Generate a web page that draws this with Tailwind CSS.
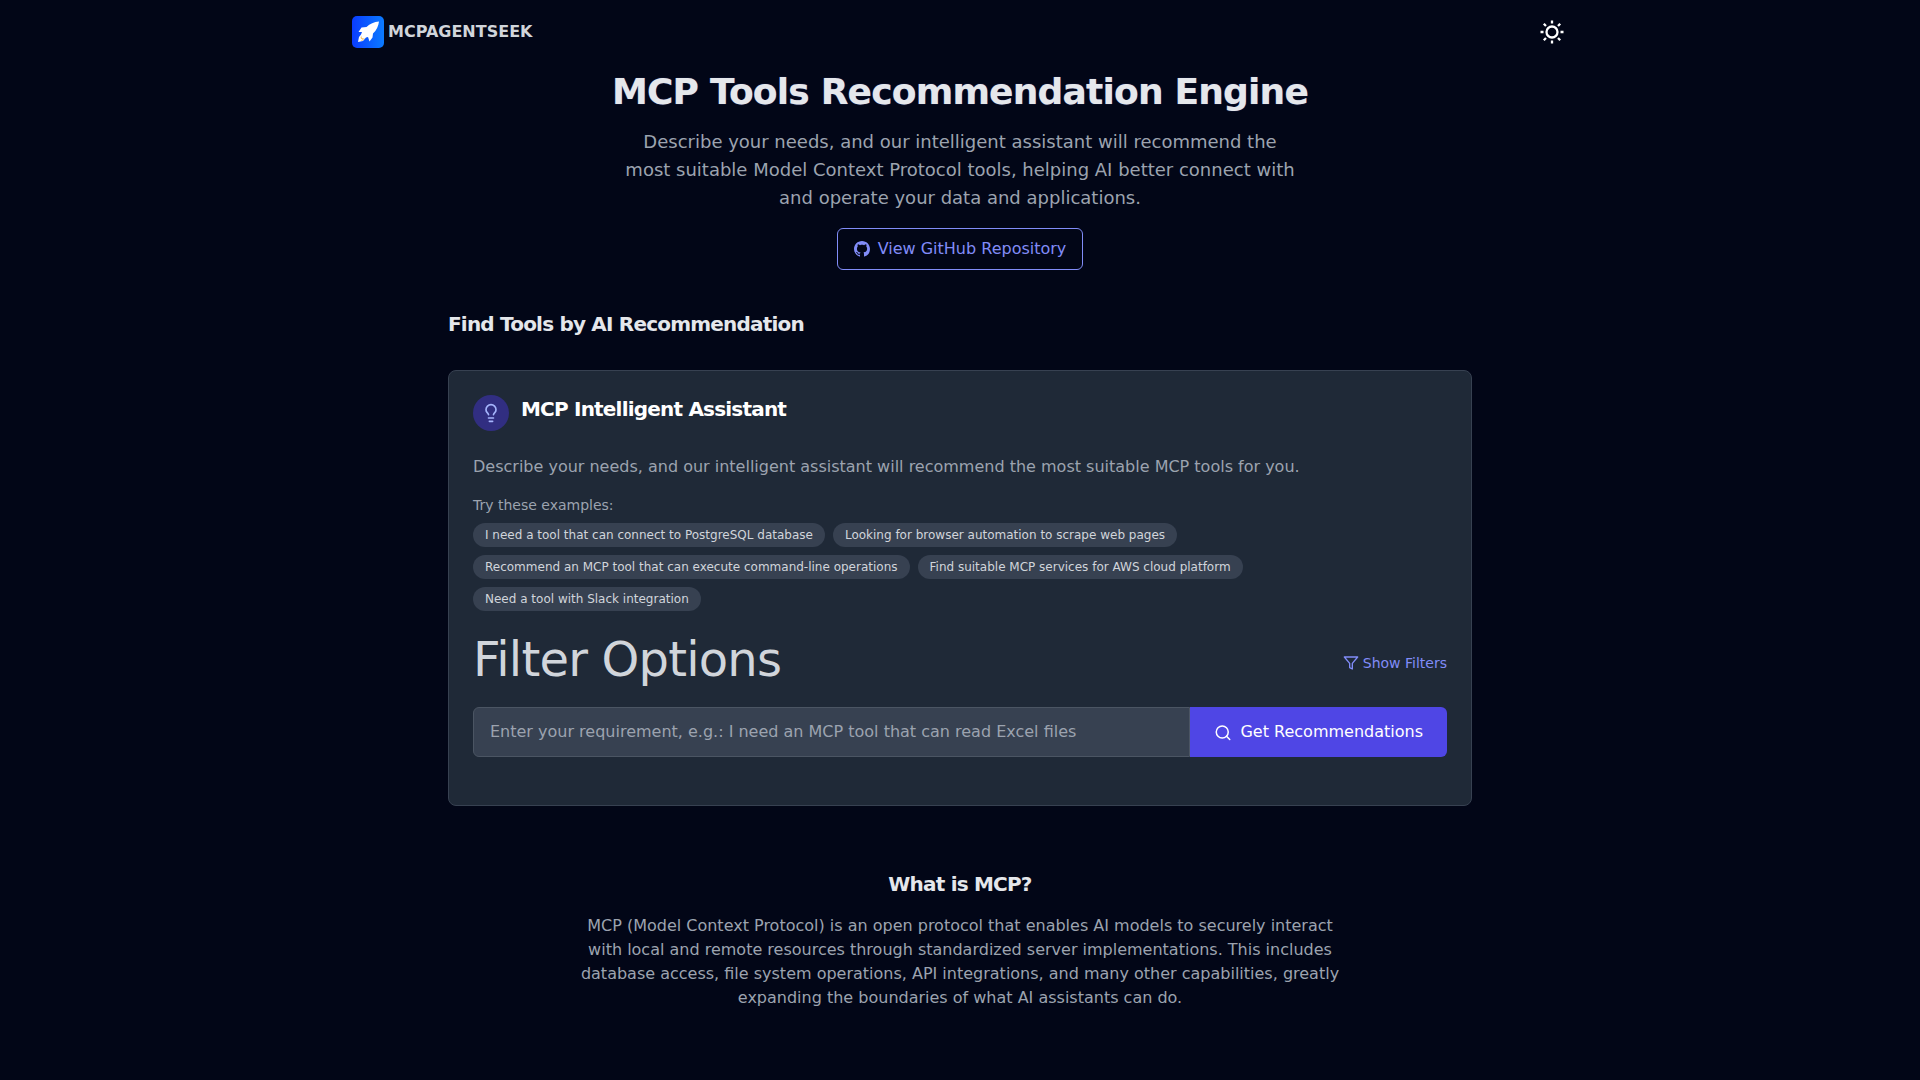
<!DOCTYPE html>
<html lang="en">
<head>
<meta charset="utf-8">
<meta name="viewport" content="width=device-width, initial-scale=1">
<title>MCPAgentSeek</title>
<script src="https://cdn.jsdelivr.net/npm/@tailwindcss/browser@4"></script>
</head>
<body class="min-h-screen bg-[#020617] font-['DejaVu_Sans',sans-serif] text-base text-[#9ca3af]">
<header class="mx-auto flex h-16 max-w-7xl items-center justify-between px-8">
  <a href="#" class="flex items-center gap-1 font-bold text-[#d1d5db]">
    <svg class="size-8" viewBox="0 0 32 32" aria-hidden="true">
      <defs><linearGradient id="logo" x1="0" y1="0" x2="1" y2="0"><stop offset="0" stop-color="#0a3cff"/><stop offset="1" stop-color="#0b7bff"/></linearGradient></defs>
      <rect width="32" height="32" rx="5" fill="url(#logo)"/>
      <path fill="#fff" d="M27 5.500C22 6 18 7.500 14.500 11L9.500 11.500L6.500 16L10 16L9 18.500L7 21L6 26L11 25L14 21.500L16 21L17.500 25.500L20.500 21.500L21 17.500C24.500 14.500 26.500 10 27 5.500Z"/>
      <path fill="#f8c15c" d="M9.500 19.500C9 22 11 23 13 22L10 25L7.500 23.500Z"/>
      <path fill="#fff" d="M8.500 21C8.500 22.500 9.500 23.500 11 23.500L8 25L7 24Z"/>
    </svg>
    <span>MCPAGENTSEEK</span>
  </a>
  <button type="button" aria-label="Toggle theme" class="flex size-8 items-center justify-center text-white">
    <svg class="size-6" viewBox="0 0 24 24" fill="none" stroke="currentColor" stroke-width="2.300" aria-hidden="true">
      <circle cx="12" cy="12" r="5.500"/>
      <path d="M12 .5v3M12 20.500v3M.5 12h3M20.500 12h3M3.800 3.800l2.200 2.200M18 18l2.200 2.200M20.200 3.800L18 6M6 18l-2.200 2.200"/>
    </svg>
  </button>
</header>
<main>
  <section class="mx-auto flex max-w-2xl flex-col items-center pt-2 text-center">
    <h1 class="text-4xl font-bold whitespace-nowrap tracking-[-0.05rem] text-[#e5e7eb] text-shadow-[0_0_1px_rgb(129_140_248/0.6)]">MCP Tools Recommendation Engine</h1>
    <p class="mt-4 text-lg leading-7">Describe your needs, and our intelligent assistant will recommend the most suitable Model Context Protocol tools, helping AI better connect with and operate your data and applications.</p>
    <a href="#" class="mt-4 flex items-center gap-2 rounded-md border border-[#818cf8] px-4 py-2 text-[#818cf8]">
      <svg class="size-4" viewBox="0 0 16 16" fill="currentColor" aria-hidden="true"><path d="M8 0C3.580 0 0 3.580 0 8c0 3.540 2.290 6.530 5.470 7.590.4.070.55-.17.55-.38 0-.19-.01-.82-.01-1.490-2.010.37-2.530-.49-2.690-.94-.09-.23-.48-.94-.82-1.130-.28-.15-.68-.52-.01-.53.63-.01 1.080.58 1.230.82.72 1.210 1.870.87 2.330.66.070-.52.28-.87.51-1.070-1.780-.2-3.640-.89-3.640-3.950 0-.87.31-1.590.82-2.150-.08-.2-.36-1.020.08-2.120 0 0 .67-.21 2.200.82.64-.18 1.320-.27 2-.27s1.360.09 2 .27c1.530-1.040 2.200-.82 2.200-.82.44 1.100.16 1.920.08 2.120.51.56.82 1.270.82 2.150 0 3.070-1.870 3.750-3.650 3.950.29.25.54.73.54 1.480 0 1.070-.01 1.930-.01 2.200 0 .21.15.46.55.38A8.010 8.010 0 0 0 16 8c0-4.420-3.580-8-8-8z"/></svg>
      <span>View GitHub Repository</span>
    </a>
  </section>
  <section class="mx-auto mt-10 max-w-5xl">
    <h2 class="text-xl leading-7 font-bold tracking-[-0.05rem] text-[#e5e7eb]">Find Tools by AI Recommendation</h2>
    <div class="mt-8 rounded-lg border border-[#374151] bg-[#1f2937] px-6 pt-6 pb-12">
      <div class="flex gap-3">
        <span class="flex size-9 items-center justify-center rounded-full bg-[#312e81] text-[#a5b4fc]">
          <svg class="size-5" viewBox="0 0 24 24" fill="none" stroke="currentColor" stroke-width="2" stroke-linecap="round" stroke-linejoin="round" aria-hidden="true"><path d="M15 14c.2-1 .7-1.700 1.500-2.500 1-.9 1.500-2.200 1.500-3.500A6 6 0 0 0 6 8c0 1 .2 2.200 1.500 3.500.7.7 1.300 1.500 1.500 2.500M9 18h6M10 22h4"/></svg>
        </span>
        <h3 class="text-xl leading-7 font-bold tracking-[-0.05rem] text-white">MCP Intelligent Assistant</h3>
      </div>
      <p class="mt-6">Describe your needs, and our intelligent assistant will recommend the most suitable MCP tools for you.</p>
      <p class="mt-4 text-sm leading-5">Try these examples:</p>
      <div class="mt-2 flex flex-wrap gap-2 text-xs leading-4 text-[#d1d5db]">
        <button type="button" class="rounded-full bg-[#374151] px-3 py-1">I need a tool that can connect to PostgreSQL database</button>
        <button type="button" class="rounded-full bg-[#374151] px-3 py-1">Looking for browser automation to scrape web pages</button>
        <button type="button" class="rounded-full bg-[#374151] px-3 py-1">Recommend an MCP tool that can execute command-line operations</button>
        <button type="button" class="rounded-full bg-[#374151] px-3 py-1">Find suitable MCP services for AWS cloud platform</button>
        <button type="button" class="rounded-full bg-[#374151] px-3 py-1">Need a tool with Slack integration</button>
      </div>
      <div class="mt-4 flex items-center justify-between">
        <h4 class="pb-2 text-5xl leading-16 tracking-[-0.05rem] text-[#d1d5db]">Filter Options</h4>
        <button type="button" class="flex items-center gap-1 text-sm text-[#818cf8]">
          <svg class="size-4" viewBox="0 0 24 24" fill="none" stroke="currentColor" stroke-width="2" stroke-linecap="round" stroke-linejoin="round" aria-hidden="true"><path d="M22 3H2l8 9.460V19l4 2v-8.540z"/></svg>
          <span>Show Filters</span>
        </button>
      </div>
      <form class="mt-2 flex">
        <input type="text" aria-label="Your requirement" placeholder="Enter your requirement, e.g.: I need an MCP tool that can read Excel files" class="min-w-0 flex-1 rounded-l-md border border-[#4b5563] bg-[#374151] px-4 py-3 text-white placeholder:text-[#9ca3af]">
        <button type="button" class="flex items-center gap-2 rounded-r-md bg-[#4f46e5] px-6 py-3 text-white">
          <svg class="size-[18px]" viewBox="0 0 24 24" fill="none" stroke="currentColor" stroke-width="2" stroke-linecap="round" stroke-linejoin="round" aria-hidden="true"><circle cx="11" cy="12" r="8"/><path d="M21 22l-4.300-4.300"/></svg>
          <span>Get Recommendations</span>
        </button>
      </form>
    </div>
  </section>
  <section class="mx-auto mt-16 max-w-3xl pb-16 text-center">
    <h2 class="text-xl leading-7 font-bold tracking-[-0.05rem] text-[#e5e7eb]">What is MCP?</h2>
    <p class="mt-4">MCP (Model Context Protocol) is an open protocol that enables AI models to securely interact with local and remote resources through standardized server implementations. This includes database access, file system operations, API integrations, and many other capabilities, greatly expanding the boundaries of what AI assistants can do.</p>
  </section>
</main>
</body>
</html>
